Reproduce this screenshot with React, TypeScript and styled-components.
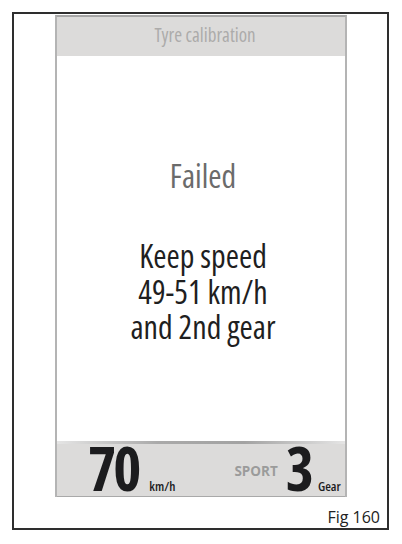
import React from "react";
import styled, { createGlobalStyle } from "styled-components";

const Global = createGlobalStyle`
  html, body { margin: 0; padding: 0; background: #fff; }
  body { font-family: "Open Sans", "DejaVu Sans Condensed", sans-serif; font-stretch: 75%; }
`;

const Frame = styled.div`
  box-sizing: border-box;
  margin: 12px 0 0 12px;
  width: 377px;
  height: 518px;
  border: 2px solid #2e2e2e;
  padding: 1px 3px 0 41px;
  display: flex;
  flex-direction: column;
`;

const Screen = styled.div`
  box-sizing: border-box;
  width: 292px;
  height: 488px;
  border-left: 2px solid #b4b4b4;
  border-right: 2px solid #b4b4b4;
  border-top: 2px solid #a6a6a6;
  display: flex;
  flex-direction: column;
`;

const Header = styled.div`
  box-sizing: border-box;
  height: 39px;
  padding: 0 0 4px 8px;
  background: #dcdbda;
  display: flex;
  align-items: center;
  justify-content: center;
  color: #acabaa;
  font-size: 19px;
`;

const Body = styled.div`
  flex: 1;
  background: #fff;
  display: flex;
  flex-direction: column;
  align-items: center;
  padding: 102px 0 0 4px;
`;

const Status = styled.div`
  font-size: 32px;
  line-height: 36px;
  color: #6b6b6b;
  margin-bottom: 44px;
`;

const Instruction = styled.div`
  font-size: 32px;
  line-height: 35.5px;
  color: #1f1f1f;
  text-align: center;
`;

const Bar = styled.div`
  position: relative;
  height: 56px;
  background: #dcdbda;
  border-bottom: 1px solid #a9a9a9;
  box-sizing: border-box;
  display: flex;
  align-items: flex-end;
  padding: 0 0 3px 31px;
  &::before {
    content: "";
    position: absolute;
    left: 0;
    right: 0;
    top: 0;
    height: 3px;
    background: linear-gradient(to right, #e6e6e6 0%, #a4a4a4 35%, #9c9c9c 65%, #e6e6e6 100%);
    opacity: 0.9;
  }
`;

const Big = styled.span`
  font-weight: 700;
  font-size: 60px;
  line-height: 50px;
  color: #1c1c1e;
  letter-spacing: -3px;
`;

const Unit = styled.span<{ gap?: number }>`
  font-size: 13px;
  line-height: 14px;
  color: #1c1c1e;
  margin-left: ${(p) => p.gap ?? 10}px;
  font-weight: 600;
`;

const Mode = styled.span`
  font-size: 13.5px;
  font-stretch: 100%;
  font-weight: 700;
  color: #9b9b9b;
  line-height: 16px;
  margin: 0 8px 14px 59px;
`;

const Caption = styled.div`
  align-self: flex-end;
  margin-top: 9px;
  margin-right: 4px;
  font-size: 16px;
  font-stretch: 100%;
  color: #222;
`;

export default function App() {
  return (
    <>
      <Global />
      <Frame>
        <Screen>
          <Header>Tyre calibration</Header>
          <Body>
            <Status>Failed</Status>
            <Instruction>
              Keep speed
              <br />
              49-51 km/h
              <br />
              and 2nd gear
            </Instruction>
          </Body>
          <Bar>
            <Big>70</Big>
            <Unit gap={11}>km/h</Unit>
            <Mode>SPORT</Mode>
            <Big>3</Big>
            <Unit gap={7}>Gear</Unit>
          </Bar>
        </Screen>
        <Caption>Fig 160</Caption>
      </Frame>
    </>
  );
}
